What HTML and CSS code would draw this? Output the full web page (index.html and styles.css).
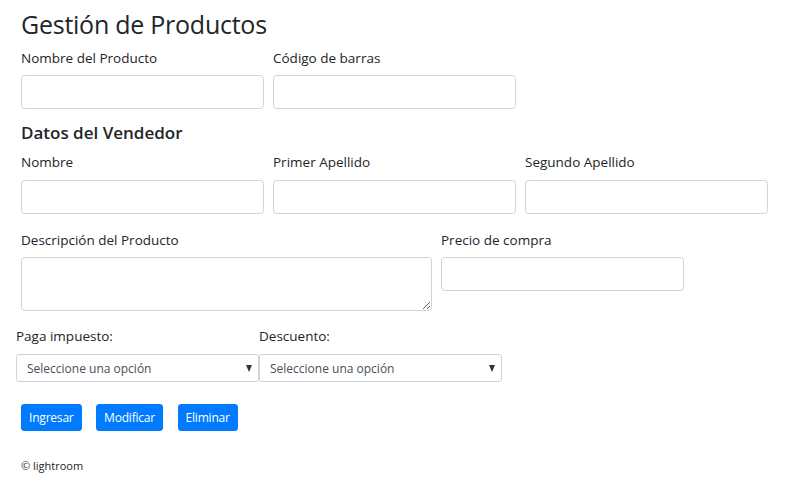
FILE: index.html
```html
<!DOCTYPE html>
<html lang="es">
<head>
<meta charset="utf-8">
<title>Gestión de Productos</title>
<link rel="stylesheet" href="styles.css">
</head>
<body>
<main class="page">
  <h1 class="title">Gestión de Productos</h1>
  <div class="grid row1">
    <div class="field"><label class="lbl">Nombre del Producto</label><input class="ctl" type="text"></div>
    <div class="field"><label class="lbl">Código de barras</label><input class="ctl" type="text"></div>
  </div>
  <h2 class="subtitle">Datos del Vendedor</h2>
  <div class="grid row2">
    <div class="field"><label class="lbl">Nombre</label><input class="ctl" type="text"></div>
    <div class="field"><label class="lbl">Primer Apellido</label><input class="ctl" type="text"></div>
    <div class="field"><label class="lbl">Segundo Apellido</label><input class="ctl" type="text"></div>
  </div>
  <div class="grid row3">
    <div class="field"><label class="lbl">Descripción del Producto</label><textarea class="ctl area"></textarea></div>
    <div class="field"><label class="lbl">Precio de compra</label><input class="ctl" type="text"></div>
  </div>
  <div class="selects">
    <div class="sfield"><label class="lbl">Paga impuesto:</label>
      <div class="selwrap"><select class="sel"><option>Seleccione una opción</option></select></div>
    </div>
    <div class="sfield"><label class="lbl">Descuento:</label>
      <div class="selwrap"><select class="sel"><option>Seleccione una opción</option></select></div>
    </div>
  </div>
  <div class="buttons">
    <button class="btn b1">Ingresar</button>
    <button class="btn b2">Modificar</button>
    <button class="btn b3">Eliminar</button>
  </div>
  <footer class="foot">© lightroom</footer>
</main>
</body>
</html>
```
FILE: styles.css
```css
html, body { margin: 0; padding: 0; background: #fff; }
body {
  font-family: "Open Sans", "Noto Sans", "Liberation Sans", sans-serif;
  color: #212529;
}
.page { padding: 9px 0 0 21px; width: 760px; }
.title {
  margin: 0;
  font-size: 25px;
  line-height: 30px;
  font-weight: 500;
  letter-spacing: -0.25px;
}
.grid { display: grid; grid-template-columns: 243px 243px 243px; column-gap: 9px; }
.row1 { margin-top: 9px; }
.row3 { grid-template-columns: 411px 243px; column-gap: 9px; margin-top: 16px; }
.field { display: flex; flex-direction: column; }
.lbl {
  font-size: 13.5px;
  line-height: 20px;
  margin-bottom: 7px;
  display: block;
}
.ctl {
  box-sizing: border-box;
  height: 34px;
  border: 1px solid #ced4da;
  border-radius: 3.6px;
  background: #fff;
  margin: 0;
  padding: 0 11px;
  font: inherit;
}
.area { height: 54px; resize: vertical; }
.subtitle {
  margin: 13px 0 9px 0;
  font-size: 17px;
  line-height: 22px;
  font-weight: 600;
}
.row2 .lbl { line-height: 19px; margin-bottom: 8px; }
.selects { display: flex; margin: 16px 0 0 -5px; }
.sfield { display: flex; flex-direction: column; width: 243px; }
.sfield .lbl { line-height: 19px; margin-bottom: 8px; }
.selwrap { position: relative; }
.selwrap::after {
  content: "";
  position: absolute;
  right: 7px;
  top: 11px;
  border-left: 3.5px solid transparent;
  border-right: 3.5px solid transparent;
  border-top: 7px solid #333;
  pointer-events: none;
}
.sel {
  -webkit-appearance: none;
  appearance: none;
  box-sizing: border-box;
  width: 243px;
  height: 28px;
  border: 1px solid #ced4da;
  border-radius: 3px;
  background: #fff;
  color: #495057;
  font-family: inherit;
  font-size: 12px;
  padding: 0 10px;
  margin: 0;
}
.buttons { display: flex; gap: 14.5px; margin-top: 22px; }
.btn {
  box-sizing: border-box;
  height: 27px;
  border: 1px solid #007bff;
  background: #007bff;
  color: #fff;
  border-radius: 3px;
  font-family: inherit;
  font-size: 12px;
  padding: 0 7px;
  margin: 0;
  letter-spacing: -0.2px;
}
.foot { margin-top: 27px; font-size: 11px; line-height: 16px; }
```
